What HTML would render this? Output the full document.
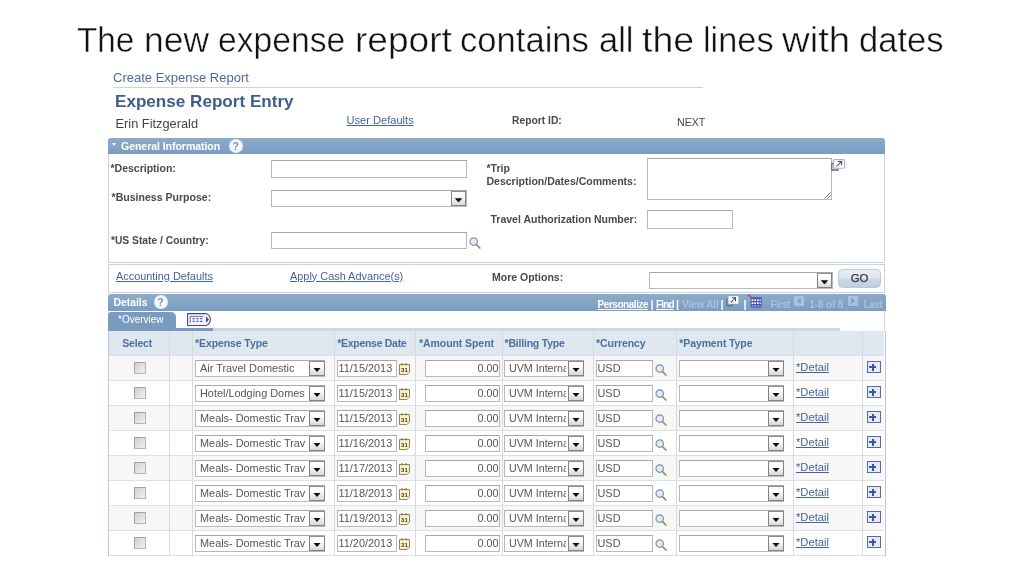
<!DOCTYPE html><html><head><meta charset="utf-8"><title>Expense report</title><style>
*{box-sizing:border-box;margin:0;padding:0}
html,body{width:1024px;height:576px;background:#fff;overflow:hidden}
body{will-change:transform;font-family:"Liberation Sans",sans-serif;color:#444;position:relative}
.a{position:absolute;white-space:nowrap;line-height:1}
.title{left:78px;top:18.8px;font-size:35.2px;color:#111;letter-spacing:0;height:42px;line-height:42px;-webkit-text-stroke:0.45px #fff}
.lbl{font-weight:700;font-size:10.5px;color:#494949}
.inp{position:absolute;background:#fff;border:1px solid #b8b8b8;border-top-color:#a6a6a6}
.bar{position:absolute;background:linear-gradient(#93a9bf 0,#8aaac7 1.5px,#7b9dc3 100%);}
.help{width:14px;height:14px;border-radius:50%;background:radial-gradient(#fff 30%,#e4edf8 75%,#c9d9ec);color:#7a90ac;font-size:10.5px;font-weight:700;text-align:center;line-height:14.5px}
.ic{position:absolute;overflow:visible}
.lnk{color:#44649b;text-decoration:underline;font-size:10.9px}
.dd{position:absolute;width:15.6px;margin-left:-0.4px;background:linear-gradient(#fff 30%,#d8d8d8);border:1px solid #828282;border-top-color:#8e8e8e}
.dd:after{content:"";position:absolute;left:3.2px;top:6.3px;width:7.4px;height:4.1px;background:#0c0c0c;clip-path:polygon(0 0,100% 0,50% 100%)}
.th{font-weight:700;font-size:10.5px;color:#4c6f9f}
.cell{font-size:10.9px;color:#565656}
.vl{position:absolute;width:1px;background:#d5d9e0}
.hl{position:absolute;height:1px;background:#dcdfe3}
.cb{position:absolute;width:11.6px;height:11.6px;border:1px solid #a2a2a2;border-right-color:#b4b4b4;border-bottom-color:#b4b4b4;background:linear-gradient(135deg,#cfcfcf,#f2f2f2)}
.plus{position:absolute;width:14px;height:12.4px;border:1px solid #5a6a9c;background:#e3ebfa}
.plus:before{content:"";position:absolute;left:1.4px;top:4.4px;width:7.2px;height:1.8px;background:#3c5799}
.plus:after{content:"";position:absolute;left:4.2px;top:1.6px;width:1.8px;height:7.4px;background:#3c5799}
</style></head><body>
<div class="a title" style="left:0;width:1024px"><span style="position:absolute;left:77.47px;top:0;transform-origin:0 0;transform:scale(0.9454,1)">The</span> <span style="position:absolute;left:143.64px;top:0;transform-origin:0 0;transform:scale(1.0069,1)">new</span> <span style="position:absolute;left:217.64px;top:0;transform-origin:0 0;transform:scale(0.9564,1)">expense</span> <span style="position:absolute;left:354.57px;top:0;transform-origin:0 0;transform:scale(1.0535,1)">report</span> <span style="position:absolute;left:459.7px;top:0;transform-origin:0 0;transform:scale(0.9835,1)">contains</span> <span style="position:absolute;left:598.69px;top:0;transform-origin:0 0;transform:scale(0.9787,1)">all</span> <span style="position:absolute;left:641.62px;top:0;transform-origin:0 0;transform:scale(1.0658,1)">the</span> <span style="position:absolute;left:702.66px;top:0;transform-origin:0 0;transform:scale(0.9752,1)">lines</span> <span style="position:absolute;left:781.9px;top:0;transform-origin:0 0;transform:scale(1.0885,1)">with</span> <span style="position:absolute;left:858.89px;top:0;transform-origin:0 0;transform:scale(0.9810,1)">dates</span></div>
<div class="a" style="left:113px;top:71px;font-size:13px;color:#4e6993">Create Expense Report</div>
<div class="hl" style="left:113px;top:87.2px;width:590px;height:1.3px;background:#d2d2d2"></div>
<div class="a" style="left:115px;top:92.5px;font-size:17.1px;font-weight:700;color:#3f5d88">Expense Report Entry</div>
<div class="a" style="left:115.5px;top:117.5px;font-size:12.8px;color:#444">Erin Fitzgerald</div>
<div class="a lnk" style="left:346.5px;top:114.5px;font-size:11.1px">User Defaults</div>
<div class="a lbl" style="left:512px;top:115.5px;font-size:10.3px">Report ID:</div>
<div class="a" style="left:677px;top:116.5px;font-size:10.6px;color:#444">NEXT</div>
<div style="position:absolute;left:108px;top:138px;width:777px;height:125px;border:1px solid #c6d3e2;border-radius:3px 3px 0 0"></div>
<div class="bar" style="left:108px;top:138px;width:777px;height:15.5px;border-radius:3px 3px 0 0"></div>
<div class="a" style="left:111.5px;top:143px;border:2.5px solid transparent;border-top:3.5px solid #f4f8fc;border-bottom:none"></div>
<div class="a" style="left:121px;top:140.5px;font-size:10.6px;letter-spacing:-0.08px;font-weight:700;color:#fff">General Information</div>
<div class="a help" style="left:228.8px;top:138.8px">?</div>
<div class="a lbl" style="left:110.5px;top:163px">*Description:</div>
<div class="inp" style="left:271px;top:160px;width:196px;height:18px"></div>
<div class="a lbl" style="left:111.6px;top:192.3px;font-size:10.55px">*Business Purpose:</div>
<div class="inp" style="left:271px;top:190px;width:196px;height:17px"></div><div class="dd" style="left:451px;top:191px;height:15px"></div>
<div class="a lbl" style="left:110.9px;top:236px;font-size:10.3px">*US State / Country:</div>
<div class="inp" style="left:271px;top:232px;width:196px;height:17px"></div>
<svg class="ic" style="left:468.6px;top:236.6px" width="13" height="13" viewBox="0 0 13 13"><line x1="7.5" y1="7.6" x2="10.9" y2="11" stroke="#8f8e66" stroke-width="1.7" stroke-linecap="round"/><circle cx="4.7" cy="4.6" r="3.7" fill="#e0ebf8" stroke="#808b9c" stroke-width="1.15"/></svg>
<div class="a lbl" style="left:486.5px;top:163.2px">*Trip</div>
<div class="a lbl" style="left:486.5px;top:176px">Description/Dates/Comments:</div>
<div class="inp" style="left:647px;top:158px;width:185px;height:42px"></div>
<svg class="ic" style="left:824px;top:192px" width="7" height="7" viewBox="0 0 7 7"><path d="M0.5 6.5L6.5 0.5M3.5 6.5L6.5 3.5" stroke="#666" stroke-width="0.9"/></svg>
<svg class="ic" style="left:831.4px;top:158.5px" width="14" height="12" viewBox="0 0 14 12"><path d="M2.5 4.5H0.8V11H7V9.6" fill="none" stroke="#666" stroke-width="1.3"/><rect x="2.6" y="0.6" width="11" height="8.6" rx="1" fill="#fff" stroke="#a7b3c5" stroke-width="1.1"/><path d="M5.5 7.5L10.3 2.7M6.8 2.4H10.6V6.2" fill="none" stroke="#4a4a4a" stroke-width="1.05"/></svg>
<div class="a lbl" style="left:490.5px;top:213.6px">Travel Authorization Number:</div>
<div class="inp" style="left:647px;top:210px;width:86px;height:19px"></div>
<div style="position:absolute;left:108px;top:264px;width:777px;height:29px;border:1px solid #c6d3e2"></div>
<div class="a lnk" style="left:116px;top:270.5px">Accounting Defaults</div>
<div class="a lnk" style="left:290px;top:270.5px">Apply Cash Advance(s)</div>
<div class="a lbl" style="left:492px;top:271.5px">More Options:</div>
<div class="inp" style="left:649px;top:272px;width:184px;height:17px"></div><div class="dd" style="left:817px;top:273px;height:15px"></div>
<div class="a" style="left:838.4px;top:269.4px;width:42.4px;height:18.3px;border:1px solid #bcc8d6;border-radius:4.5px;background:linear-gradient(#e8eef5 0%,#dce5ef 48%,#cad7e5 56%,#c0cfdf 100%);font-size:11.4px;color:#383838;text-align:center;line-height:17.8px;-webkit-text-stroke:0.25px #383838">GO</div>
<div class="bar" style="left:108px;top:294px;width:778px;height:17.3px;border-radius:3px 3px 0 0"></div>
<div class="a" style="left:113.4px;top:298px;font-size:10.4px;font-weight:700;color:#fff">Details</div>
<div class="a help" style="left:153.5px;top:295px">?</div>
<svg class="ic" style="left:726px;top:296px" width="13" height="11" viewBox="0 0 13 11"><path d="M2.4 3.4H0.7V9.6H6.4V8" fill="none" stroke="#5d7594" stroke-width="1.2"/><rect x="2.4" y="0.2" width="10" height="7.6" fill="#fff"/><path d="M4.8 6.4L9.2 2M6 1.7H9.5V5.2" fill="none" stroke="#444" stroke-width="1.05"/></svg>
<div class="vl" style="left:884px;top:311px;height:20px;background:#d2dce8"></div>
<svg class="ic" style="left:747px;top:293.5px" width="15" height="14" viewBox="0 0 15 14"><rect x="3.6" y="3.2" width="11" height="10.4" fill="#4957b4"/><path d="M4.6 6.2H13.6M4.6 9.2H13.6" stroke="#fff" stroke-width="1.7" stroke-dasharray="1.7 1"/><path d="M4.6 11.8H13.6" stroke="#b9bff0" stroke-width="1.2" stroke-dasharray="1.7 1"/><path d="M1 0.8L6 4.6" stroke="#c7475a" stroke-width="1.6"/></svg>
<svg class="ic" style="left:794px;top:295.5px" width="10" height="10" viewBox="0 0 10 10"><rect width="10" height="10" fill="#a9c1da"/><path d="M6.8 2L3 5L6.8 8Z" fill="#7b9dc3"/></svg>
<svg class="ic" style="left:848px;top:295.5px" width="10" height="10" viewBox="0 0 10 10"><rect width="10" height="10" fill="#a9c1da"/><path d="M3.2 2L7 5L3.2 8Z" fill="#7b9dc3"/></svg>
<div class="a" style="left:597.6px;font-size:10px;font-weight:700;color:#fff;top:300px;letter-spacing:-0.463px;text-decoration:underline">Personalize</div>
<div class="a" style="left:650.6px;font-size:10px;font-weight:700;color:#fff;top:300px;font-size:11px;top:299.3px">|</div>
<div class="a" style="left:656px;font-size:10px;font-weight:700;color:#fff;top:300px;letter-spacing:-0.827px;text-decoration:underline">Find</div>
<div class="a" style="left:676px;font-size:10px;font-weight:700;color:#fff;top:300px;font-size:11px;top:299.3px">|</div>
<div class="a" style="left:682px;font-size:10px;font-weight:700;color:#fff;top:300px;letter-spacing:-0.150px;color:#a9c1da">View All</div>
<div class="a" style="left:720.6px;font-size:10px;font-weight:700;color:#fff;top:300px;font-size:11px;top:299.3px">|</div>
<div class="a" style="left:743.5px;font-size:10px;font-weight:700;color:#fff;top:300px;font-size:11px;top:299.3px">|</div>
<div class="a" style="left:770.6px;font-size:10px;font-weight:700;color:#fff;top:300px;letter-spacing:-0.494px;color:#a9c1da">First</div>
<div class="a" style="left:809.3px;font-size:10px;font-weight:700;color:#fff;top:300px;letter-spacing:-0.139px;color:#a9c1da">1-8 of 8</div>
<div class="a" style="left:863.6px;font-size:10px;font-weight:700;color:#fff;top:300px;letter-spacing:-0.541px;color:#a9c1da">Last</div>
<div class="a" style="left:108px;top:312px;width:68px;height:19px;background:#7a9bc0;border-radius:3px 5px 0 0"></div>
<div class="a" style="left:108px;top:328px;width:104.5px;height:3px;background:#7a9bc0"></div>
<div class="a" style="left:212.5px;top:328px;width:627.5px;height:3px;background:#c9d7e8"></div>
<div class="a" style="left:118px;top:315px;font-size:10px;color:#fff">*Overview</div>
<svg class="ic" style="left:187px;top:313px" width="24" height="13" viewBox="0 0 24 13"><path d="M0.6 0.6H19.5Q23.4 2.5 23.4 6.5Q23.4 10.5 19.5 12.4H0.6Z" fill="#f6f6fe" stroke="#46477a" stroke-width="1.05"/><path d="M3.2 10V3.4H16.5" fill="none" stroke="#6a6ea2" stroke-width="1"/><path d="M5.5 5.6H16M5.5 8.4H16" stroke="#5a5fa0" stroke-width="1.1" stroke-dasharray="2.2 1.6"/><path d="M19 3.2L22 6.5L19 9.8Z" fill="#3b4a9c"/></svg>
<div style="position:absolute;left:108px;top:331px;width:777.5px;height:225.3px;border:1px solid #bcc7d3;border-top:none;border-bottom-width:1.5px"></div>
<div style="position:absolute;left:109px;top:331px;width:775px;height:24.5px;background:#dfe7ef"></div>
<div style="position:absolute;left:109px;top:355.5px;width:775px;height:25px;background:#f7f7f7"></div>
<div class="hl" style="left:109px;top:380.0px;width:775px"></div>
<div class="hl" style="left:109px;top:405.0px;width:775px"></div>
<div style="position:absolute;left:109px;top:405.5px;width:775px;height:25px;background:#f7f7f7"></div>
<div class="hl" style="left:109px;top:430.0px;width:775px"></div>
<div class="hl" style="left:109px;top:455.0px;width:775px"></div>
<div style="position:absolute;left:109px;top:455.5px;width:775px;height:25px;background:#f7f7f7"></div>
<div class="hl" style="left:109px;top:480.0px;width:775px"></div>
<div class="hl" style="left:109px;top:505.0px;width:775px"></div>
<div style="position:absolute;left:109px;top:505.5px;width:775px;height:25px;background:#f7f7f7"></div>
<div class="hl" style="left:109px;top:530.0px;width:775px"></div>
<div class="hl" style="left:109px;top:555.0px;width:775px"></div>
<div class="hl" style="left:109px;top:355px;width:775px"></div>
<div class="vl" style="left:169px;top:331px;height:225px"></div>
<div class="vl" style="left:192px;top:331px;height:225px"></div>
<div class="vl" style="left:334px;top:331px;height:225px"></div>
<div class="vl" style="left:415px;top:331px;height:225px"></div>
<div class="vl" style="left:502px;top:331px;height:225px"></div>
<div class="vl" style="left:593px;top:331px;height:225px"></div>
<div class="vl" style="left:676px;top:331px;height:225px"></div>
<div class="vl" style="left:793px;top:331px;height:225px"></div>
<div class="vl" style="left:862px;top:331px;height:225px"></div>
<div class="a th" style="left:122.2px;top:338.2px;letter-spacing:-0.190px">Select</div>
<div class="a th" style="left:195px;top:338.2px;letter-spacing:-0.094px">*Expense Type</div>
<div class="a th" style="left:337.3px;top:338.2px;letter-spacing:-0.296px">*Expense Date</div>
<div class="a th" style="left:419px;top:338.2px;letter-spacing:-0.071px">*Amount Spent</div>
<div class="a th" style="left:504.5px;top:338.2px;letter-spacing:-0.201px">*Billing Type</div>
<div class="a th" style="left:596px;top:338.2px;letter-spacing:-0.067px">*Currency</div>
<div class="a th" style="left:679.3px;top:338.2px;letter-spacing:-0.108px">*Payment Type</div>
<div class="cb" style="left:134.4px;top:362.2px"></div>
<div class="inp" style="left:195px;top:360.3px;width:130px;height:16.5px"></div><div class="dd" style="left:309.5px;top:360.5px;height:15.4px"></div>
<div class="a cell" style="left:200px;top:362.8px;width:108px;overflow:hidden">Air Travel Domestic</div>
<div class="inp" style="left:337px;top:360.3px;width:60px;height:16.5px"></div>
<div class="a cell" style="left:338.5px;top:362.8px">11/15/2013</div>
<svg class="ic" style="left:399.2px;top:362.9px" width="11" height="12" viewBox="0 0 11 12"><path d="M0.5 1.5H10.5V9L8 11.5H0.5Z" fill="#fdf1c4" stroke="#8d865c" stroke-width="1"/><path d="M3 0V2.5M7 0V2.5" stroke="#7a7450" stroke-width="1"/><text x="5.4" y="8.8" font-size="6" font-weight="700" text-anchor="middle" fill="#3a3a3a" font-family="Liberation Sans,sans-serif">31</text></svg>
<div class="inp" style="left:425px;top:360.3px;width:75px;height:16.5px"></div>
<div class="a cell" style="left:425px;width:73.6px;text-align:right;top:362.8px">0.00</div>
<div class="inp" style="left:504px;top:360.3px;width:80px;height:16.5px"></div><div class="dd" style="left:568.5px;top:360.5px;height:15.4px"></div>
<div class="a cell" style="left:509px;top:362.8px;width:57px;overflow:hidden;font-size:10.7px">UVM Internal</div>
<div class="inp" style="left:596px;top:360.3px;width:57px;height:16.5px"></div>
<div class="a cell" style="left:597.5px;top:362.8px">USD</div>
<svg class="ic" style="left:654.8px;top:364.1px" width="13" height="13" viewBox="0 0 13 13"><line x1="7.5" y1="7.6" x2="10.9" y2="11" stroke="#8f8e66" stroke-width="1.7" stroke-linecap="round"/><circle cx="4.7" cy="4.6" r="3.7" fill="#e0ebf8" stroke="#808b9c" stroke-width="1.15"/></svg>
<div class="inp" style="left:679px;top:360.3px;width:104.5px;height:16.5px"></div><div class="dd" style="left:768.5px;top:360.5px;height:15.4px"></div>
<div class="a lnk" style="left:796px;top:361.7px;font-size:11.2px">*Detail</div>
<div class="plus" style="left:866.8px;top:361.1px"></div>
<div class="cb" style="left:134.4px;top:387.2px"></div>
<div class="inp" style="left:195px;top:385.3px;width:130px;height:16.5px"></div><div class="dd" style="left:309.5px;top:385.5px;height:15.4px"></div>
<div class="a cell" style="left:200px;top:387.8px;width:108px;overflow:hidden">Hotel/Lodging Domes</div>
<div class="inp" style="left:337px;top:385.3px;width:60px;height:16.5px"></div>
<div class="a cell" style="left:338.5px;top:387.8px">11/15/2013</div>
<svg class="ic" style="left:399.2px;top:387.9px" width="11" height="12" viewBox="0 0 11 12"><path d="M0.5 1.5H10.5V9L8 11.5H0.5Z" fill="#fdf1c4" stroke="#8d865c" stroke-width="1"/><path d="M3 0V2.5M7 0V2.5" stroke="#7a7450" stroke-width="1"/><text x="5.4" y="8.8" font-size="6" font-weight="700" text-anchor="middle" fill="#3a3a3a" font-family="Liberation Sans,sans-serif">31</text></svg>
<div class="inp" style="left:425px;top:385.3px;width:75px;height:16.5px"></div>
<div class="a cell" style="left:425px;width:73.6px;text-align:right;top:387.8px">0.00</div>
<div class="inp" style="left:504px;top:385.3px;width:80px;height:16.5px"></div><div class="dd" style="left:568.5px;top:385.5px;height:15.4px"></div>
<div class="a cell" style="left:509px;top:387.8px;width:57px;overflow:hidden;font-size:10.7px">UVM Internal</div>
<div class="inp" style="left:596px;top:385.3px;width:57px;height:16.5px"></div>
<div class="a cell" style="left:597.5px;top:387.8px">USD</div>
<svg class="ic" style="left:654.8px;top:389.1px" width="13" height="13" viewBox="0 0 13 13"><line x1="7.5" y1="7.6" x2="10.9" y2="11" stroke="#8f8e66" stroke-width="1.7" stroke-linecap="round"/><circle cx="4.7" cy="4.6" r="3.7" fill="#e0ebf8" stroke="#808b9c" stroke-width="1.15"/></svg>
<div class="inp" style="left:679px;top:385.3px;width:104.5px;height:16.5px"></div><div class="dd" style="left:768.5px;top:385.5px;height:15.4px"></div>
<div class="a lnk" style="left:796px;top:386.7px;font-size:11.2px">*Detail</div>
<div class="plus" style="left:866.8px;top:386.1px"></div>
<div class="cb" style="left:134.4px;top:412.2px"></div>
<div class="inp" style="left:195px;top:410.3px;width:130px;height:16.5px"></div><div class="dd" style="left:309.5px;top:410.5px;height:15.4px"></div>
<div class="a cell" style="left:200px;top:412.8px;width:108px;overflow:hidden">Meals- Domestic Trav</div>
<div class="inp" style="left:337px;top:410.3px;width:60px;height:16.5px"></div>
<div class="a cell" style="left:338.5px;top:412.8px">11/15/2013</div>
<svg class="ic" style="left:399.2px;top:412.9px" width="11" height="12" viewBox="0 0 11 12"><path d="M0.5 1.5H10.5V9L8 11.5H0.5Z" fill="#fdf1c4" stroke="#8d865c" stroke-width="1"/><path d="M3 0V2.5M7 0V2.5" stroke="#7a7450" stroke-width="1"/><text x="5.4" y="8.8" font-size="6" font-weight="700" text-anchor="middle" fill="#3a3a3a" font-family="Liberation Sans,sans-serif">31</text></svg>
<div class="inp" style="left:425px;top:410.3px;width:75px;height:16.5px"></div>
<div class="a cell" style="left:425px;width:73.6px;text-align:right;top:412.8px">0.00</div>
<div class="inp" style="left:504px;top:410.3px;width:80px;height:16.5px"></div><div class="dd" style="left:568.5px;top:410.5px;height:15.4px"></div>
<div class="a cell" style="left:509px;top:412.8px;width:57px;overflow:hidden;font-size:10.7px">UVM Internal</div>
<div class="inp" style="left:596px;top:410.3px;width:57px;height:16.5px"></div>
<div class="a cell" style="left:597.5px;top:412.8px">USD</div>
<svg class="ic" style="left:654.8px;top:414.1px" width="13" height="13" viewBox="0 0 13 13"><line x1="7.5" y1="7.6" x2="10.9" y2="11" stroke="#8f8e66" stroke-width="1.7" stroke-linecap="round"/><circle cx="4.7" cy="4.6" r="3.7" fill="#e0ebf8" stroke="#808b9c" stroke-width="1.15"/></svg>
<div class="inp" style="left:679px;top:410.3px;width:104.5px;height:16.5px"></div><div class="dd" style="left:768.5px;top:410.5px;height:15.4px"></div>
<div class="a lnk" style="left:796px;top:411.7px;font-size:11.2px">*Detail</div>
<div class="plus" style="left:866.8px;top:411.1px"></div>
<div class="cb" style="left:134.4px;top:437.2px"></div>
<div class="inp" style="left:195px;top:435.3px;width:130px;height:16.5px"></div><div class="dd" style="left:309.5px;top:435.5px;height:15.4px"></div>
<div class="a cell" style="left:200px;top:437.8px;width:108px;overflow:hidden">Meals- Domestic Trav</div>
<div class="inp" style="left:337px;top:435.3px;width:60px;height:16.5px"></div>
<div class="a cell" style="left:338.5px;top:437.8px">11/16/2013</div>
<svg class="ic" style="left:399.2px;top:437.9px" width="11" height="12" viewBox="0 0 11 12"><path d="M0.5 1.5H10.5V9L8 11.5H0.5Z" fill="#fdf1c4" stroke="#8d865c" stroke-width="1"/><path d="M3 0V2.5M7 0V2.5" stroke="#7a7450" stroke-width="1"/><text x="5.4" y="8.8" font-size="6" font-weight="700" text-anchor="middle" fill="#3a3a3a" font-family="Liberation Sans,sans-serif">31</text></svg>
<div class="inp" style="left:425px;top:435.3px;width:75px;height:16.5px"></div>
<div class="a cell" style="left:425px;width:73.6px;text-align:right;top:437.8px">0.00</div>
<div class="inp" style="left:504px;top:435.3px;width:80px;height:16.5px"></div><div class="dd" style="left:568.5px;top:435.5px;height:15.4px"></div>
<div class="a cell" style="left:509px;top:437.8px;width:57px;overflow:hidden;font-size:10.7px">UVM Internal</div>
<div class="inp" style="left:596px;top:435.3px;width:57px;height:16.5px"></div>
<div class="a cell" style="left:597.5px;top:437.8px">USD</div>
<svg class="ic" style="left:654.8px;top:439.1px" width="13" height="13" viewBox="0 0 13 13"><line x1="7.5" y1="7.6" x2="10.9" y2="11" stroke="#8f8e66" stroke-width="1.7" stroke-linecap="round"/><circle cx="4.7" cy="4.6" r="3.7" fill="#e0ebf8" stroke="#808b9c" stroke-width="1.15"/></svg>
<div class="inp" style="left:679px;top:435.3px;width:104.5px;height:16.5px"></div><div class="dd" style="left:768.5px;top:435.5px;height:15.4px"></div>
<div class="a lnk" style="left:796px;top:436.7px;font-size:11.2px">*Detail</div>
<div class="plus" style="left:866.8px;top:436.1px"></div>
<div class="cb" style="left:134.4px;top:462.2px"></div>
<div class="inp" style="left:195px;top:460.3px;width:130px;height:16.5px"></div><div class="dd" style="left:309.5px;top:460.5px;height:15.4px"></div>
<div class="a cell" style="left:200px;top:462.8px;width:108px;overflow:hidden">Meals- Domestic Trav</div>
<div class="inp" style="left:337px;top:460.3px;width:60px;height:16.5px"></div>
<div class="a cell" style="left:338.5px;top:462.8px">11/17/2013</div>
<svg class="ic" style="left:399.2px;top:462.9px" width="11" height="12" viewBox="0 0 11 12"><path d="M0.5 1.5H10.5V9L8 11.5H0.5Z" fill="#fdf1c4" stroke="#8d865c" stroke-width="1"/><path d="M3 0V2.5M7 0V2.5" stroke="#7a7450" stroke-width="1"/><text x="5.4" y="8.8" font-size="6" font-weight="700" text-anchor="middle" fill="#3a3a3a" font-family="Liberation Sans,sans-serif">31</text></svg>
<div class="inp" style="left:425px;top:460.3px;width:75px;height:16.5px"></div>
<div class="a cell" style="left:425px;width:73.6px;text-align:right;top:462.8px">0.00</div>
<div class="inp" style="left:504px;top:460.3px;width:80px;height:16.5px"></div><div class="dd" style="left:568.5px;top:460.5px;height:15.4px"></div>
<div class="a cell" style="left:509px;top:462.8px;width:57px;overflow:hidden;font-size:10.7px">UVM Internal</div>
<div class="inp" style="left:596px;top:460.3px;width:57px;height:16.5px"></div>
<div class="a cell" style="left:597.5px;top:462.8px">USD</div>
<svg class="ic" style="left:654.8px;top:464.1px" width="13" height="13" viewBox="0 0 13 13"><line x1="7.5" y1="7.6" x2="10.9" y2="11" stroke="#8f8e66" stroke-width="1.7" stroke-linecap="round"/><circle cx="4.7" cy="4.6" r="3.7" fill="#e0ebf8" stroke="#808b9c" stroke-width="1.15"/></svg>
<div class="inp" style="left:679px;top:460.3px;width:104.5px;height:16.5px"></div><div class="dd" style="left:768.5px;top:460.5px;height:15.4px"></div>
<div class="a lnk" style="left:796px;top:461.7px;font-size:11.2px">*Detail</div>
<div class="plus" style="left:866.8px;top:461.1px"></div>
<div class="cb" style="left:134.4px;top:487.2px"></div>
<div class="inp" style="left:195px;top:485.3px;width:130px;height:16.5px"></div><div class="dd" style="left:309.5px;top:485.5px;height:15.4px"></div>
<div class="a cell" style="left:200px;top:487.8px;width:108px;overflow:hidden">Meals- Domestic Trav</div>
<div class="inp" style="left:337px;top:485.3px;width:60px;height:16.5px"></div>
<div class="a cell" style="left:338.5px;top:487.8px">11/18/2013</div>
<svg class="ic" style="left:399.2px;top:487.9px" width="11" height="12" viewBox="0 0 11 12"><path d="M0.5 1.5H10.5V9L8 11.5H0.5Z" fill="#fdf1c4" stroke="#8d865c" stroke-width="1"/><path d="M3 0V2.5M7 0V2.5" stroke="#7a7450" stroke-width="1"/><text x="5.4" y="8.8" font-size="6" font-weight="700" text-anchor="middle" fill="#3a3a3a" font-family="Liberation Sans,sans-serif">31</text></svg>
<div class="inp" style="left:425px;top:485.3px;width:75px;height:16.5px"></div>
<div class="a cell" style="left:425px;width:73.6px;text-align:right;top:487.8px">0.00</div>
<div class="inp" style="left:504px;top:485.3px;width:80px;height:16.5px"></div><div class="dd" style="left:568.5px;top:485.5px;height:15.4px"></div>
<div class="a cell" style="left:509px;top:487.8px;width:57px;overflow:hidden;font-size:10.7px">UVM Internal</div>
<div class="inp" style="left:596px;top:485.3px;width:57px;height:16.5px"></div>
<div class="a cell" style="left:597.5px;top:487.8px">USD</div>
<svg class="ic" style="left:654.8px;top:489.1px" width="13" height="13" viewBox="0 0 13 13"><line x1="7.5" y1="7.6" x2="10.9" y2="11" stroke="#8f8e66" stroke-width="1.7" stroke-linecap="round"/><circle cx="4.7" cy="4.6" r="3.7" fill="#e0ebf8" stroke="#808b9c" stroke-width="1.15"/></svg>
<div class="inp" style="left:679px;top:485.3px;width:104.5px;height:16.5px"></div><div class="dd" style="left:768.5px;top:485.5px;height:15.4px"></div>
<div class="a lnk" style="left:796px;top:486.7px;font-size:11.2px">*Detail</div>
<div class="plus" style="left:866.8px;top:486.1px"></div>
<div class="cb" style="left:134.4px;top:512.2px"></div>
<div class="inp" style="left:195px;top:510.3px;width:130px;height:16.5px"></div><div class="dd" style="left:309.5px;top:510.5px;height:15.4px"></div>
<div class="a cell" style="left:200px;top:512.8px;width:108px;overflow:hidden">Meals- Domestic Trav</div>
<div class="inp" style="left:337px;top:510.3px;width:60px;height:16.5px"></div>
<div class="a cell" style="left:338.5px;top:512.8px">11/19/2013</div>
<svg class="ic" style="left:399.2px;top:512.9px" width="11" height="12" viewBox="0 0 11 12"><path d="M0.5 1.5H10.5V9L8 11.5H0.5Z" fill="#fdf1c4" stroke="#8d865c" stroke-width="1"/><path d="M3 0V2.5M7 0V2.5" stroke="#7a7450" stroke-width="1"/><text x="5.4" y="8.8" font-size="6" font-weight="700" text-anchor="middle" fill="#3a3a3a" font-family="Liberation Sans,sans-serif">31</text></svg>
<div class="inp" style="left:425px;top:510.3px;width:75px;height:16.5px"></div>
<div class="a cell" style="left:425px;width:73.6px;text-align:right;top:512.8px">0.00</div>
<div class="inp" style="left:504px;top:510.3px;width:80px;height:16.5px"></div><div class="dd" style="left:568.5px;top:510.5px;height:15.4px"></div>
<div class="a cell" style="left:509px;top:512.8px;width:57px;overflow:hidden;font-size:10.7px">UVM Internal</div>
<div class="inp" style="left:596px;top:510.3px;width:57px;height:16.5px"></div>
<div class="a cell" style="left:597.5px;top:512.8px">USD</div>
<svg class="ic" style="left:654.8px;top:514.1px" width="13" height="13" viewBox="0 0 13 13"><line x1="7.5" y1="7.6" x2="10.9" y2="11" stroke="#8f8e66" stroke-width="1.7" stroke-linecap="round"/><circle cx="4.7" cy="4.6" r="3.7" fill="#e0ebf8" stroke="#808b9c" stroke-width="1.15"/></svg>
<div class="inp" style="left:679px;top:510.3px;width:104.5px;height:16.5px"></div><div class="dd" style="left:768.5px;top:510.5px;height:15.4px"></div>
<div class="a lnk" style="left:796px;top:511.7px;font-size:11.2px">*Detail</div>
<div class="plus" style="left:866.8px;top:511.1px"></div>
<div class="cb" style="left:134.4px;top:537.2px"></div>
<div class="inp" style="left:195px;top:535.3px;width:130px;height:16.5px"></div><div class="dd" style="left:309.5px;top:535.5px;height:15.4px"></div>
<div class="a cell" style="left:200px;top:537.8px;width:108px;overflow:hidden">Meals- Domestic Trav</div>
<div class="inp" style="left:337px;top:535.3px;width:60px;height:16.5px"></div>
<div class="a cell" style="left:338.5px;top:537.8px">11/20/2013</div>
<svg class="ic" style="left:399.2px;top:537.9px" width="11" height="12" viewBox="0 0 11 12"><path d="M0.5 1.5H10.5V9L8 11.5H0.5Z" fill="#fdf1c4" stroke="#8d865c" stroke-width="1"/><path d="M3 0V2.5M7 0V2.5" stroke="#7a7450" stroke-width="1"/><text x="5.4" y="8.8" font-size="6" font-weight="700" text-anchor="middle" fill="#3a3a3a" font-family="Liberation Sans,sans-serif">31</text></svg>
<div class="inp" style="left:425px;top:535.3px;width:75px;height:16.5px"></div>
<div class="a cell" style="left:425px;width:73.6px;text-align:right;top:537.8px">0.00</div>
<div class="inp" style="left:504px;top:535.3px;width:80px;height:16.5px"></div><div class="dd" style="left:568.5px;top:535.5px;height:15.4px"></div>
<div class="a cell" style="left:509px;top:537.8px;width:57px;overflow:hidden;font-size:10.7px">UVM Internal</div>
<div class="inp" style="left:596px;top:535.3px;width:57px;height:16.5px"></div>
<div class="a cell" style="left:597.5px;top:537.8px">USD</div>
<svg class="ic" style="left:654.8px;top:539.1px" width="13" height="13" viewBox="0 0 13 13"><line x1="7.5" y1="7.6" x2="10.9" y2="11" stroke="#8f8e66" stroke-width="1.7" stroke-linecap="round"/><circle cx="4.7" cy="4.6" r="3.7" fill="#e0ebf8" stroke="#808b9c" stroke-width="1.15"/></svg>
<div class="inp" style="left:679px;top:535.3px;width:104.5px;height:16.5px"></div><div class="dd" style="left:768.5px;top:535.5px;height:15.4px"></div>
<div class="a lnk" style="left:796px;top:536.7px;font-size:11.2px">*Detail</div>
<div class="plus" style="left:866.8px;top:536.1px"></div>
</body></html>
